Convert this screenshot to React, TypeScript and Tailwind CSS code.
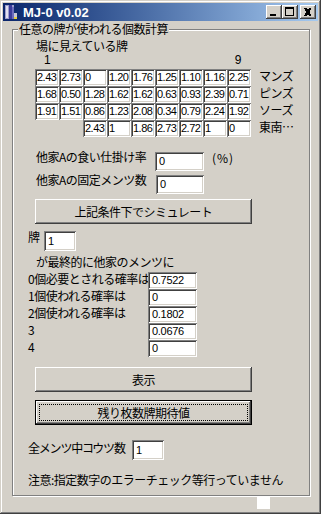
import React from 'react';

const tiles: string[][] = [
  ['2.43', '2.73', '0', '1.20', '1.76', '1.25', '1.10', '1.16', '2.25'],
  ['1.68', '0.50', '1.28', '1.62', '1.62', '0.63', '0.93', '2.39', '0.71'],
  ['1.91', '1.51', '0.86', '1.23', '2.08', '0.34', '0.79', '2.24', '1.92'],
];
const honors = ['2.43', '1', '1.86', '2.73', '2.72', '1', '0'];
const suits = ['マンズ', 'ピンズ', 'ソーズ', '東南…'];
const probs: [string, string][] = [
  ['0個必要とされる確率は', '0.7522'],
  ['1個使われる確率は', '0'],
  ['2個使われる確率は', '0.1802'],
  ['3', '0.0676'],
  ['4', '0'],
];

const sunken =
  'bg-white shadow-[inset_1px_1px_0_#808080,inset_-1px_-1px_0_#ffffff,inset_2px_2px_0_#404040,inset_-2px_-2px_0_#d4d0c8]';
const raised =
  'bg-[#d4d0c8] shadow-[inset_-1px_-1px_0_#404040,inset_1px_1px_0_#ffffff,inset_-2px_-2px_0_#808080,inset_2px_2px_0_#d4d0c8]';

function Field({ value, className }: { value: string; className: string }) {
  return (
    <div
      className={`${sunken} ${className} shrink-0 flex items-center pl-[4px] font-['Liberation_Sans',sans-serif] text-[11px] tracking-[-0.3px] leading-none`}
    >
      {value}
    </div>
  );
}

function Cell({ value }: { value: string }) {
  return (
    <div
      className={`${sunken} flex items-center pl-[2px] font-['Liberation_Sans',sans-serif] text-[11px] tracking-[-0.5px] leading-none`}
    >
      {value}
    </div>
  );
}

function Button({ label, focused }: { label: string; focused?: boolean }) {
  return (
    <div
      className={`${raised} relative ml-[7px] w-[217px] h-[25px] flex items-center justify-center leading-[14px] ${
        focused ? 'border border-black' : ''
      }`}
    >
      {focused && <div className="absolute inset-[3px] border border-dotted border-black" />}
      <span className="relative">{label}</span>
    </div>
  );
}

function CaptionButton({ children }: { children: React.ReactNode }) {
  return <div className={`${raised} w-[16px] h-[14px]`}>{children}</div>;
}

function TitleBar() {
  return (
    <div className="h-[18px] flex items-center bg-linear-to-r from-[#0a246a] to-[#a6caf0] pr-[2px]">
      <svg width="16" height="16" viewBox="0 0 16 16" shapeRendering="crispEdges">
        <rect x="2" y="1" width="9" height="14" fill="#9c9ccc" />
        <rect x="3" y="2" width="2" height="12" fill="#e0e0f0" />
        <rect x="6" y="1" width="3" height="14" fill="#3c3c9c" />
        <rect x="9" y="3" width="2" height="12" fill="#6c6cbc" />
        <rect x="11" y="9" width="3" height="6" fill="#c8c8d8" />
        <rect x="11" y="13" width="3" height="2" fill="#e8d040" />
      </svg>
      <span className="ml-[4px] text-white font-bold font-['Liberation_Sans',sans-serif] text-[13px] tracking-normal leading-none">
        MJ-0 v0.02
      </span>
      <div className="ml-auto flex">
        <CaptionButton>
          <svg width="16" height="14" shapeRendering="crispEdges">
            <rect x="4" y="9" width="6" height="2" fill="#000" />
          </svg>
        </CaptionButton>
        <CaptionButton>
          <svg width="16" height="14" shapeRendering="crispEdges">
            <rect x="3.5" y="2.5" width="8" height="8" fill="none" stroke="#000" />
            <rect x="3" y="3" width="9" height="1" fill="#000" />
          </svg>
        </CaptionButton>
        <div className="ml-[2px]">
          <CaptionButton>
            <svg width="16" height="14" shapeRendering="crispEdges">
              <path d="M4 3h2l1 1h1l1-1h2v1l-1 1v1l-1 1 1 1v1l1 1v1h-2l-1-1h-1l-1 1h-2v-1l1-1v-1l1-1-1-1v-1l-1-1z" fill="#000" />
            </svg>
          </CaptionButton>
        </div>
      </div>
    </div>
  );
}

export default function App() {
  return (
    <div className="w-[321px] h-[514px] bg-[#d4d0c8] p-[3px] flex flex-col text-black text-[12px] tracking-[-0.5px] whitespace-nowrap font-['Noto_Sans_CJK_JP',sans-serif] shadow-[inset_-1px_-1px_0_#404040,inset_1px_1px_0_#d4d0c8,inset_-2px_-2px_0_#808080,inset_2px_2px_0_#ffffff]">
      <TitleBar />

      <div className="relative mt-[8px] ml-[9px] w-[298px] h-[467px] shrink-0 border border-[#808080] shadow-[inset_1px_1px_0_#ffffff,1px_1px_0_#ffffff] pl-[15px] pt-[9px] flex flex-col">
        <span className="absolute left-[5px] top-[-8px] bg-[#d4d0c8] px-[1px] leading-[14px]">
          任意の牌が使われる個数計算
        </span>

        <div className="ml-[8px] leading-[14px]">場に見えている牌</div>

        <div className="ml-[16px] w-[197px] h-[14px] flex justify-between font-['Liberation_Sans',sans-serif] leading-[14px]">
          <span>1</span>
          <span>9</span>
        </div>

        <div className="ml-[7px] mt-[2px] flex">
          <div className="grid grid-cols-[repeat(9,24px)] auto-rows-[17px]">
            {tiles.flat().map((v, i) => (
              <Cell key={i} value={v} />
            ))}
            <div className="col-start-3 col-span-7 grid grid-cols-[repeat(7,24px)]">
              {honors.map((v, i) => (
                <Cell key={i} value={v} />
              ))}
            </div>
          </div>
          <div className="ml-[8px] flex flex-col">
            {suits.map((s) => (
              <div key={s} className="h-[17px] leading-[14px]">
                {s}
              </div>
            ))}
          </div>
        </div>

        <div className="ml-[8px] mt-[13px] flex items-start">
          <span className="w-[119px] leading-[14px]">他家Aの食い仕掛け率</span>
          <Field className="mt-[2px] w-[49px] h-[19px]" value="0" />
          <span className="ml-[8px] mt-[1px] leading-[14px] tracking-[1px]">(%)</span>
        </div>

        <div className="ml-[8px] mt-[2px] flex items-start">
          <span className="w-[120px] leading-[14px]">他家Aの固定メンツ数</span>
          <Field className="mt-[2px] w-[48px] h-[19px]" value="0" />
        </div>

        <div className="mt-[5px]">
          <Button label="上記条件下でシミュレート" />
        </div>

        <div className="mt-[6px] flex items-start">
          <span className="w-[16px] leading-[14px]">牌</span>
          <Field className="mt-[1px] w-[32px] h-[20px]" value="1" />
        </div>

        <div className="ml-[8px] mt-[4px] leading-[14px]">が最終的に他家のメンツに</div>

        <div className="mt-[3px] flex flex-col">
          {probs.map(([label, v]) => (
            <div key={label} className="h-[17px] flex items-start">
              <span className="w-[120px] leading-[14px]">{label}</span>
              <Field className="w-[49px] h-[17px]" value={v} />
            </div>
          ))}
        </div>

        <div className="mt-[10px]">
          <Button label="表示" />
        </div>
        <div className="mt-[8px]">
          <Button label="残り枚数牌期待値" focused />
        </div>

        <div className="mt-[15px] flex items-start">
          <span className="w-[104px] mt-[1px] leading-[14px] tracking-[-1.2px]">全メンツ中コウツ数</span>
          <Field className="w-[32px] h-[20px]" value="1" />
        </div>

        <div className="mt-[13px] leading-[14px]">注意:指定数字のエラーチェック等行っていません</div>
      </div>

      <div className="ml-[254px] w-[13px] h-[13px] bg-white" />
    </div>
  );
}
